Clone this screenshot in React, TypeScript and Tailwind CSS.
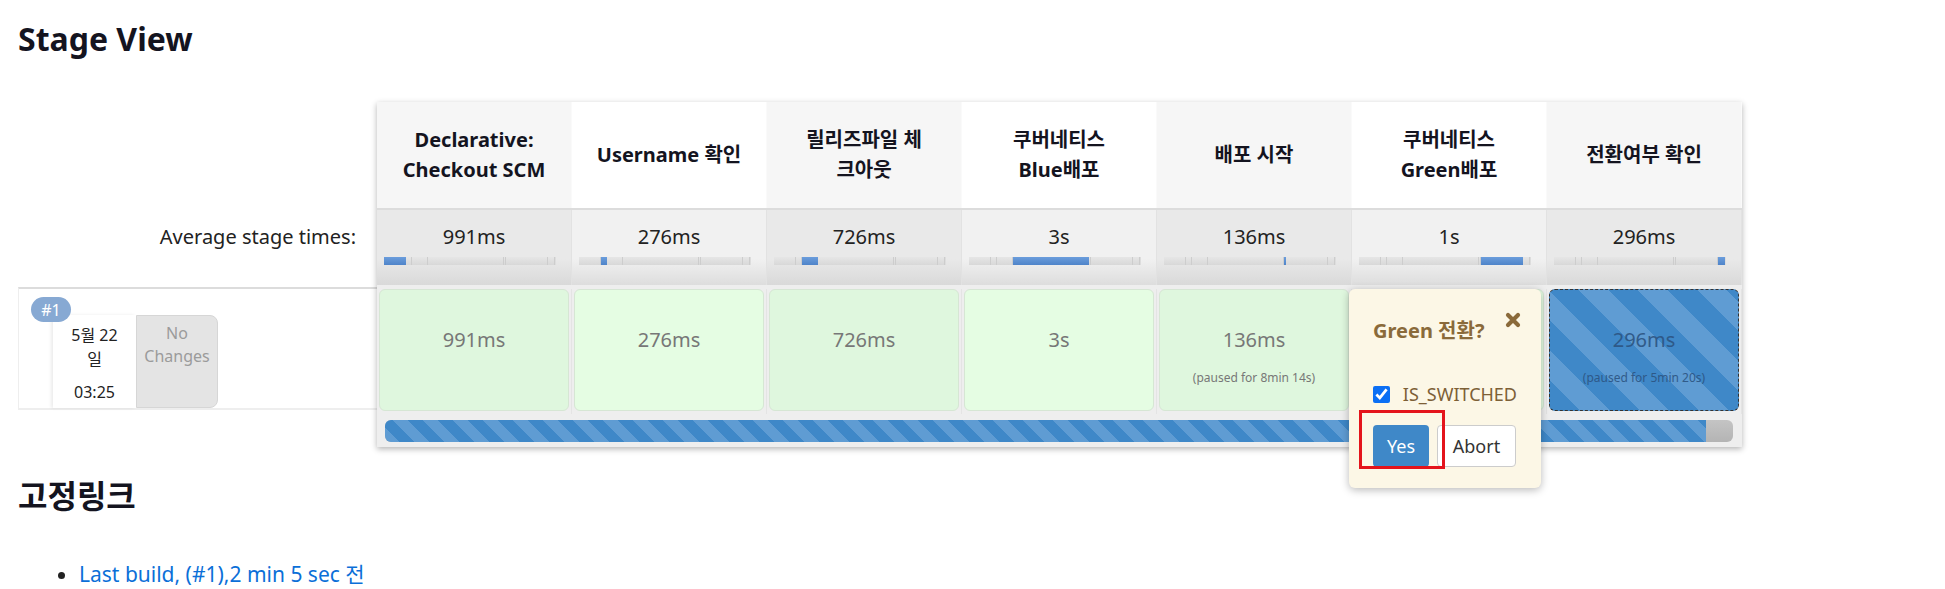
import React from 'react'

type Stage = {
  name: string[]
  avg: string
  cell: string
  paused?: string
  running?: boolean
}

const stages: Stage[] = [
  { name: ['Declarative:', 'Checkout SCM'], avg: '991ms', cell: '991ms' },
  { name: ['Username 확인'], avg: '276ms', cell: '276ms' },
  { name: ['릴리즈파일 체', '크아웃'], avg: '726ms', cell: '726ms' },
  { name: ['쿠버네티스', 'Blue배포'], avg: '3s', cell: '3s' },
  { name: ['배포 시작'], avg: '136ms', cell: '136ms', paused: '(paused for 8min 14s)' },
  // this cell sits under the input popover, so its text is hidden
  { name: ['쿠버네티스', 'Green배포'], avg: '1s', cell: '' },
  { name: ['전환여부 확인'], avg: '296ms', cell: '296ms', paused: '(paused for 5min 20s)', running: true },
]

// widths (px) of each stage inside the 172px average timeline bar
const segments = [22, 5.7, 16, 76, 2.7, 42, 6.7]

function TimeBar({ active }: { active: number }) {
  return (
    <div className="ml-[7px] flex h-[8px] w-[172px] overflow-hidden bg-[#dddddd]">
      {segments.map((w, i) => (
        <div
          key={i}
          style={{ width: w }}
          className={
            i === active
              ? 'h-full bg-[linear-gradient(#6b9ddc,#4f84c9)]'
              : 'h-full border-r border-[#cdcdcd] bg-[linear-gradient(#e6e6e6,#d8d8d8)]'
          }
        />
      ))}
    </div>
  )
}

function CloseIcon() {
  return (
    <svg width="16" height="16" viewBox="0 0 16 16" className="text-[#8a6a3a]">
      <path d="M3 3 L13 13 M13 3 L3 13" stroke="currentColor" strokeWidth="4.2" strokeLinecap="round" />
    </svg>
  )
}

function InputPopover() {
  return (
    <div className="absolute left-[972px] top-[187px] z-10 h-[199px] w-[192px] rounded-[6px] bg-[#fcf7e6] px-[24px] pt-[28px] shadow-[0_2px_8px_rgba(0,0,0,0.28)]">
      <div className="flex items-start justify-between">
        <span className="text-[20px] font-bold leading-[28px] text-[#8a6a3a]">Green 전환?</span>
        <span className="-mr-[4px] -mt-[5px]">
          <CloseIcon />
        </span>
      </div>
      <label className="mt-[37px] flex items-center gap-[13px]">
        <input type="checkbox" checked readOnly className="h-[17px] w-[17px] accent-[#0b6ff4]" />
        <span className="text-[18px] leading-[24px] text-[#7d6036]">IS_SWITCHED</span>
      </label>
      <div className="mt-[19px] flex gap-[8px]">
        <button className="h-[42px] w-[56px] rounded-[4px] bg-[#3f88c8] text-[18px] text-white">Yes</button>
        <button className="h-[42px] w-[79px] rounded-[4px] border border-[#cccccc] bg-white text-[18px] text-[#333]">
          Abort
        </button>
      </div>
      <div className="absolute left-[10px] top-[121px] h-[59px] w-[86px] border-[3px] border-[#e4141b]" />
    </div>
  )
}

export default function App() {
  return (
    <div className="min-h-screen bg-white pl-[18px] font-['Noto_Sans','Noto_Sans_CJK_KR',sans-serif] text-[#222]">
      <h2 className="pt-[19px] text-[32px] font-bold leading-[40px] text-[#14141f]">Stage View</h2>

      <div className="mt-[43px] flex">
        {/* left column: labels and build history */}
        <div className="w-[359px]">
          <div className="h-[106px]" />
          <div className="flex h-[77px] items-center justify-end pb-[20px] pr-[21px] text-[20px]">Average stage times:</div>
          <div className="relative mt-[2px] h-[123px] border-y-2 border-l border-t-[#dcdcdc] border-b-[#eeeeee] border-l-[#eeeeee] pl-[34px] pt-[26px]">
            <span className="absolute left-[12px] top-[8px] z-10 flex h-[25px] w-[40px] items-center justify-center rounded-full bg-[#87a9d3] text-[16px] text-white">
              #1
            </span>
            <div className="flex h-full">
              <div className="w-[83px] bg-white pt-[8px] text-center text-[16px] leading-[24px] shadow-[-2px_0_3px_rgba(0,0,0,0.08)]">
                <div>5월 22</div>
                <div>일</div>
                <div className="mt-[9px]">03:25</div>
              </div>
              <div className="w-[82px] rounded-r-[8px] border border-[#d6d6d6] bg-[#e4e4e4] pt-[6px] text-center text-[16px] leading-[23px] text-[#9b9b9b]">
                No
                <br />
                Changes
              </div>
            </div>
          </div>
        </div>

        {/* stage table */}
        <div className="relative w-[1365px] shadow-[0_2px_6px_rgba(0,0,0,0.3)]">
          <div className="grid h-[106px] grid-cols-7">
            {stages.map((s, i) => (
              <div
                key={i}
                className={`flex flex-col items-center justify-center border-r border-[#fafafa] text-center text-[20px] font-bold leading-[30px] text-[#14141f] ${
                  i % 2 === 0 ? 'bg-[#f6f6f6]' : 'bg-white'
                }`}
              >
                {s.name.map((l, j) => (
                  <span key={j} className="whitespace-nowrap">
                    {l}
                  </span>
                ))}
              </div>
            ))}
          </div>

          <div className="grid h-[77px] grid-cols-7 border-t-2 border-[#dcdcdc]">
            {stages.map((s, i) => (
              <div
                key={i}
                className={`border-r border-[#e2e2e2] pt-[14px] ${
                  i % 2 === 0
                    ? 'bg-[linear-gradient(#e9e9e9_65%,#d9d9d9)]'
                    : 'bg-[linear-gradient(#f1f1f1_65%,#dddddd)]'
                }`}
              >
                <div className="text-center text-[20px] leading-[26px]">{s.avg}</div>
                <div className="mt-[7px]">
                  <TimeBar active={i} />
                </div>
              </div>
            ))}
          </div>

          <div className="grid h-[129px] grid-cols-7 bg-[#eeeeee] pt-[4px]">
            {stages.map((s, i) => (
              <div key={i} className="border-r border-[#e4e4e4] px-[2px]">
                {s.running ? (
                  <div className="flex h-[122px] flex-col items-center rounded-[6px] border border-dashed border-[#333] bg-[repeating-linear-gradient(45deg,#3f88c8_0_21px,#5f9cd3_21px_42px)] pt-[36px] text-[#2d5482]">
                    <div className="text-[20px] leading-[28px] opacity-90">{s.cell}</div>
                    <div className="mt-[16px] text-[12px] leading-[16px] opacity-90">{s.paused}</div>
                  </div>
                ) : (
                  <div
                    className={`flex h-[122px] flex-col items-center rounded-[6px] border border-[#d6e6d4] pt-[36px] text-[#777] ${
                      i % 2 === 0 ? 'bg-[#dff7de]' : 'bg-[#e5fde3]'
                    }`}
                  >
                    <div className="text-[20px] leading-[28px]">{s.cell}</div>
                    {s.paused && <div className="mt-[16px] text-[12px] leading-[16px]">{s.paused}</div>}
                  </div>
                )}
              </div>
            ))}
          </div>

          <div className="flex h-[33px] bg-[#eeeeee] pb-[5px] pl-[8px] pr-[9px] pt-[6px]">
            <div className="flex flex-1 overflow-hidden rounded-[6px] bg-[linear-gradient(#c4c4c4,#b4b4b4)]">
              <div className="h-full w-[1321px] bg-[repeating-linear-gradient(45deg,#5f9cd3_0_10.6px,#3f88c8_10.6px_21.2px)]" />
            </div>
          </div>

          <InputPopover />
        </div>
      </div>

      <h2 className="mt-[29px] text-[32px] font-bold leading-[40px] text-[#14141f]">고정링크</h2>
      <ul className="mt-[43px] list-disc pl-[61px] text-[21px] leading-[30px]">
        <li>
          <a href="#" className="text-[#0b6fd8]">
            Last build, (#1),2 min 5 sec 전
          </a>
        </li>
      </ul>
    </div>
  )
}
